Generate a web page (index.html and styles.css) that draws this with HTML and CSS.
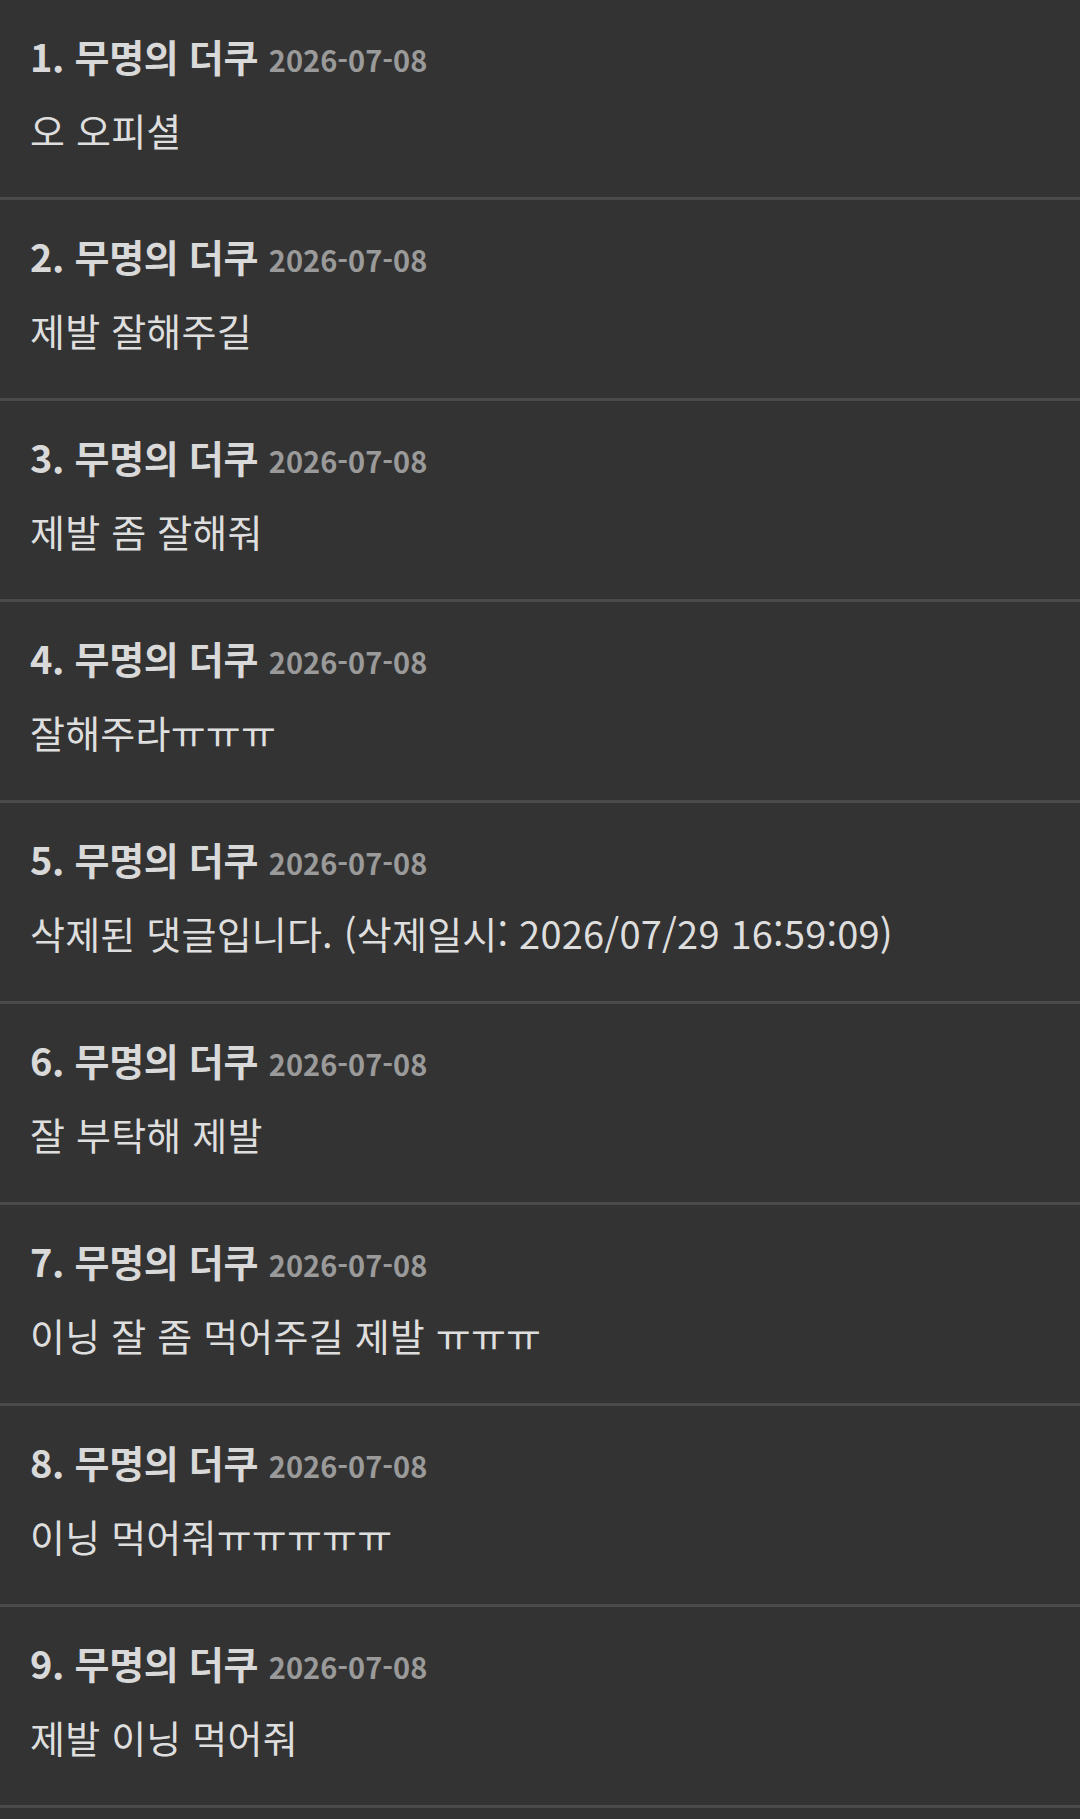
FILE: index.html
```html
<!DOCTYPE html>
<html lang="ko">
<head>
    <meta charset="utf-8" />
    <title>댓글</title>
    <link rel="stylesheet" href="styles.css">
</head>
<body>
<ul class="comments">
    <li class="comment">
        <div class="head"><b>1. 무명의 더쿠</b> <span class="date">2026-07-08</span></div>
        <p>오 오피셜</p>
    </li>
    <li class="comment">
        <div class="head"><b>2. 무명의 더쿠</b> <span class="date">2026-07-08</span></div>
        <p>제발 잘해주길</p>
    </li>
    <li class="comment">
        <div class="head"><b>3. 무명의 더쿠</b> <span class="date">2026-07-08</span></div>
        <p>제발 좀 잘해줘</p>
    </li>
    <li class="comment">
        <div class="head"><b>4. 무명의 더쿠</b> <span class="date">2026-07-08</span></div>
        <p>잘해주라ㅠㅠㅠ</p>
    </li>
    <li class="comment">
        <div class="head"><b>5. 무명의 더쿠</b> <span class="date">2026-07-08</span></div>
        <p>삭제된 댓글입니다. (삭제일시: 2026/07/29 16:59:09)</p>
    </li>
    <li class="comment">
        <div class="head"><b>6. 무명의 더쿠</b> <span class="date">2026-07-08</span></div>
        <p>잘 부탁해 제발</p>
    </li>
    <li class="comment">
        <div class="head"><b>7. 무명의 더쿠</b> <span class="date">2026-07-08</span></div>
        <p>이닝 잘 좀 먹어주길 제발 ㅠㅠㅠ</p>
    </li>
    <li class="comment">
        <div class="head"><b>8. 무명의 더쿠</b> <span class="date">2026-07-08</span></div>
        <p>이닝 먹어줘ㅠㅠㅠㅠㅠ</p>
    </li>
    <li class="comment">
        <div class="head"><b>9. 무명의 더쿠</b> <span class="date">2026-07-08</span></div>
        <p>제발 이닝 먹어줘</p>
    </li>
</ul>
</body>
</html>
```

FILE: styles.css
```css
*{ margin:0; padding:0 }
html, body{ background:#333333 }
body{
    font-family:"Noto Sans CJK KR", "Noto Sans", sans-serif;
    color:#dcdcdc;
}
.comments{ list-style:none }
.comment{
    height:198px;
    padding:0 30px;
    border-bottom:3px solid #4a4a4a;
    box-sizing:content-box;
}
.comment:first-child{ height:197px }
.head{
    padding-top:32px;
    font-size:38px; line-height:48px;
    color:#d9d9d9;
}
.head b{ font-weight:700; letter-spacing:-0.3px }
.date{
    font-size:29px; font-weight:700;
    color:#9a9a9a;
}
.comment p{
    margin-top:23px;
    font-size:38px; line-height:48px;
    color:#dedede;
    letter-spacing:0.2px;
}
```
